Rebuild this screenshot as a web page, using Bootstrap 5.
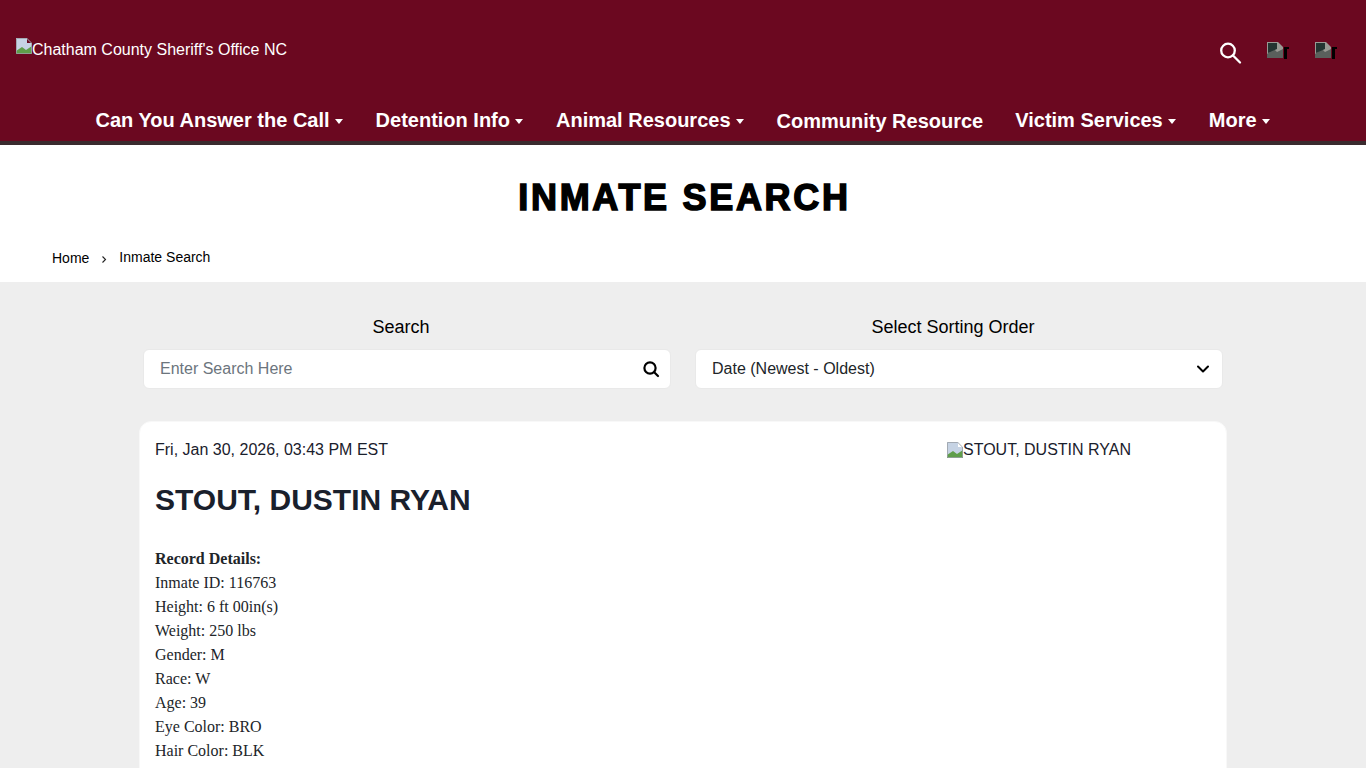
<!DOCTYPE html>
<html lang="en">
<head>
<meta charset="utf-8">
<title>Inmate Search</title>
<link href="https://cdn.jsdelivr.net/npm/bootstrap@5.3.0/dist/css/bootstrap.min.css" rel="stylesheet">
<style>
html,body{height:768px;overflow:hidden}
body{background:#eee;font-family:"Liberation Sans",Arial,sans-serif;color:#1a202c}
.site-head{background:#6b0820;height:145px;border-bottom:4px solid #3a2a2e}
.top-bar{height:97px;padding:38px 27px 0 16px}
.logo-alt{font-size:16px;line-height:18px;color:#fff}
.logo-alt span{margin-top:3px}
.broken{width:16px;height:16px;flex:none;display:inline-block;vertical-align:top}
.top-icons{gap:24px;padding-top:2px}
.top-search{margin:1px 0 0 -1px}
.dark-alt{width:24px;height:22px;overflow:hidden;display:inline-block;margin-top:-1px}
.main-nav{gap:32px;font-size:20px;font-weight:700;line-height:24px;color:#fff;padding-top:11px;height:44px}
.main-nav a{color:#fff;text-decoration:none;display:flex;align-items:center;gap:5px;height:24px}
.main-nav a.plain{margin-top:1px}
.tri{width:0;height:0;border-left:4.5px solid transparent;border-right:4.5px solid transparent;border-top:5px solid #fff;margin-top:2px;margin-right:1px}
.title-band{background:#fff;height:137px}
.page-title{font-size:36px;font-weight:700;line-height:42px;color:#000;-webkit-text-stroke:1.5px #000;letter-spacing:2.7px;text-indent:3px;padding-top:32px;margin:0}
.crumbs{padding:29px 0 0 52px;font-size:14px;line-height:18px;color:#000}
.crumbs a{color:#000;text-decoration:none;margin-top:1px}
.crumb-sep{margin:2px 12px 0 12px;width:6px;height:18px}
.search-wrap{width:1104px;margin:0 auto;padding-top:33px}
.search-col{padding:0 12px}
.field-label{font-size:18px;line-height:24px;text-align:center;margin:0 0 10px -12px;color:#000}
.field-box{height:40px;background:#fff;border:1px solid #e9e9e9;border-radius:6px;font-size:16px;color:#212529}
.box-input{padding:0 10px 0 16px}
.box-select{padding:0 13px 0 16px}
.field-box input{border:0;outline:0;background:transparent;padding:0;font:inherit;width:100%}
.field-box input::placeholder{color:#6c757d;opacity:1}
.record-box{width:1088px;margin:32px auto 0;background:#fff;border:1px solid #f8f8f8;border-radius:12px;padding:16px 15px;height:600px}
.rec-date{font-size:16px;line-height:24px}
.rec-name{font-size:30px;font-weight:700;line-height:36px;margin:20px 0 29px;color:#1a202c}
.rec-pic{width:264px;font-size:16px;line-height:16px;padding-top:4px}
.rec-details{font-family:"Liberation Serif","Times New Roman",serif;font-size:16px;line-height:24px;color:#212529}
</style>
</head>
<body>
<header class="site-head">
  <div class="top-bar d-flex justify-content-between">
    <div class="logo-alt d-flex">
      <svg class="broken" viewBox="0 0 16 16"><path d="M0 0h11l5 5v11H0z" fill="#c6d3e4"/><path d="M0 13l6-4 4 3 6-4v8H0z" fill="#5f9e4a"/><path d="M11 0v5h5z" fill="#6b0820"/><path d="M.5.5h10.3l4.7 4.7V15.5H.5z" fill="none" stroke="#9aa0a6" stroke-width=".8"/></svg>
      <span>Chatham County Sheriff's Office NC</span>
    </div>
    <div class="top-icons d-flex align-items-start">
      <svg class="top-search" width="24" height="24" viewBox="0 0 24 24" fill="none" stroke="#fff" stroke-width="2.3" stroke-linecap="round"><circle cx="9" cy="9.5" r="6.8"/><path d="M14 14.5 21 21.5"/></svg>
      <span class="dark-alt"><svg width="24" height="22" viewBox="0 0 24 22"><path d="M0 1h11l5 5v11H0z" fill="#9a9a94"/><path d="M0 13l7-5 3 3 6-3v9H0z" fill="#5a605c"/><path d="M1 2h9v6l-9 4z" fill="#243431"/><path d="M17 6h5v2h-2v10h-3z" fill="#000"/></svg></span>
      <span class="dark-alt"><svg width="24" height="22" viewBox="0 0 24 22"><path d="M0 1h11l5 5v11H0z" fill="#9a9a94"/><path d="M0 13l7-5 3 3 6-3v9H0z" fill="#5a605c"/><path d="M1 2h9v6l-9 4z" fill="#243431"/><path d="M17 6h5v2h-2v10h-3z" fill="#000"/></svg></span>
    </div>
  </div>
  <nav class="main-nav d-flex justify-content-center">
    <a href="#">Can You Answer the Call<span class="tri"></span></a>
    <a href="#">Detention Info<span class="tri"></span></a>
    <a href="#">Animal Resources<span class="tri"></span></a>
    <a href="#" class="plain">Community Resource</a>
    <a href="#">Victim Services<span class="tri"></span></a>
    <a href="#">More<span class="tri"></span></a>
  </nav>
</header>
<section class="title-band">
  <h1 class="page-title text-center">INMATE SEARCH</h1>
  <div class="crumbs d-flex align-items-start">
    <a href="#">Home</a>
    <svg class="crumb-sep" viewBox="0 0 6 18" fill="none" stroke="#222" stroke-width="1.1"><path d="M1.5 6.5 4.5 9.5 1.5 12.5"/></svg>
    <span>Inmate Search</span>
  </div>
</section>
<main>
  <div class="search-wrap row g-0">
    <div class="col-6 search-col">
      <div class="field-label">Search</div>
      <div class="field-box box-input d-flex align-items-center gap-2">
        <input type="text" placeholder="Enter Search Here">
        <svg class="flex-shrink-0" width="18" height="18" viewBox="0 0 18 18" fill="none" stroke="#000" stroke-width="2.2" stroke-linecap="round"><circle cx="8" cy="8" r="5.6"/><path d="M12.2 12.2 16 16"/></svg>
      </div>
    </div>
    <div class="col-6 search-col">
      <div class="field-label">Select Sorting Order</div>
      <div class="field-box box-select d-flex align-items-center justify-content-between">
        <span>Date (Newest - Oldest)</span>
        <svg width="12" height="8" viewBox="0 0 12 8" fill="none" stroke="#000" stroke-width="2" stroke-linecap="round" stroke-linejoin="round"><path d="M1 1.5 6 6.5 11 1.5"/></svg>
      </div>
    </div>
  </div>
  <article class="record-box d-flex justify-content-between">
    <div>
      <div class="rec-date">Fri, Jan 30, 2026, 03:43 PM EST</div>
      <h2 class="rec-name">STOUT, DUSTIN RYAN</h2>
      <div class="rec-details">
        <strong>Record Details:</strong><br>
        Inmate ID: 116763<br>
        Height: 6 ft 00in(s)<br>
        Weight: 250 lbs<br>
        Gender: M<br>
        Race: W<br>
        Age: 39<br>
        Eye Color: BRO<br>
        Hair Color: BLK
      </div>
    </div>
    <div class="rec-pic d-flex">
      <svg class="broken" viewBox="0 0 16 16"><path d="M0 0h11l5 5v11H0z" fill="#c6d3e4"/><path d="M0 13l6-4 4 3 6-4v8H0z" fill="#5f9e4a"/><path d="M11 0v5h5z" fill="#fff"/><path d="M.5.5h10.3l4.7 4.7V15.5H.5z" fill="none" stroke="#9aa0a6" stroke-width=".8"/></svg>
      <span>STOUT, DUSTIN RYAN</span>
    </div>
  </article>
</main>
</body>
</html>
